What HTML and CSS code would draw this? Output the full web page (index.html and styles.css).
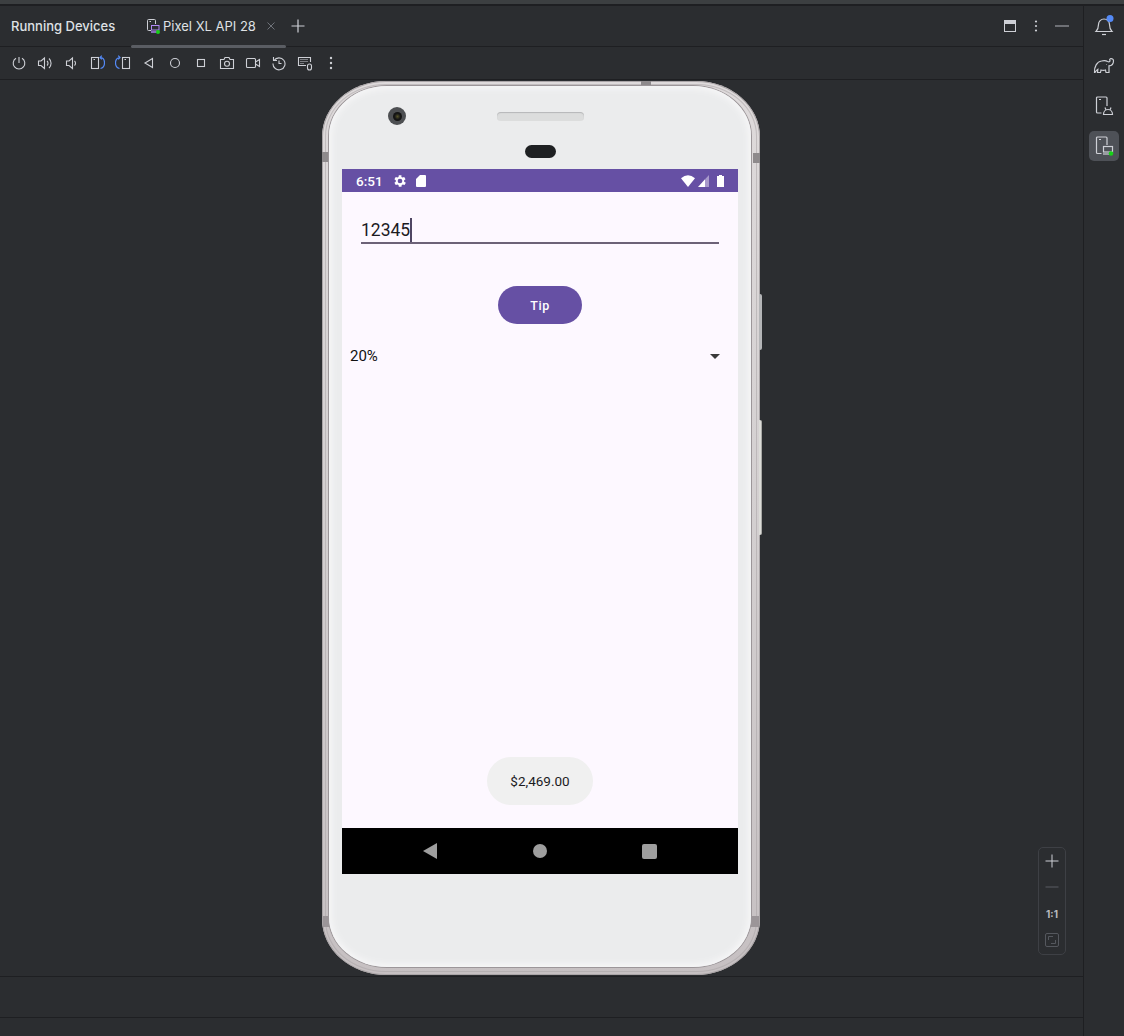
FILE: index.html
```html
<!DOCTYPE html>
<html lang="en">
<head>
<meta charset="utf-8">
<title>Running Devices</title>
<link rel="stylesheet" href="styles.css">
</head>
<body>
<div class="topstrip"></div>
<div class="ide">
  <main class="main">
    <header class="tabs">
      <span class="title">Running Devices</span>
      <div class="tab">
        <svg class="ic16" viewBox="0 0 16 16" fill="none">
          <path d="M6 12.500H3.500a1 1 0 0 1-1-1V2.500a1 1 0 0 1 1-1h6a1 1 0 0 1 1 1V6" stroke="#ced0d6"/>
          <path d="M4.500 3.500h1.500" stroke="#ced0d6"/>
          <rect x="6.500" y="7.500" width="7.500" height="4.500" stroke="#b189f5"/>
          <path d="M6 14h7" stroke="#b189f5" stroke-width="1.400"/>
          <circle cx="13" cy="14" r="2" fill="#17d117"/>
        </svg>
        <span class="tabname">Pixel XL API 28</span>
        <svg class="close" viewBox="0 0 10 10" fill="none"><path d="M1.500 1.500l7 7M8.500 1.500l-7 7" stroke="#6f737a"/></svg>
        <div class="tabline"></div>
      </div>
      <svg class="plus" viewBox="0 0 14 14" fill="none"><path d="M7 .5v13M.5 7h13" stroke="#ced0d6" stroke-width="1.200"/></svg>
      <div class="spacer"></div>
      <div class="winbtns">
        <svg class="ic12" viewBox="0 0 12 12" fill="none"><rect x=".5" y=".5" width="11" height="11" stroke="#ced0d6"/><rect x="1" y="1" width="10" height="3" fill="#ced0d6"/></svg>
        <svg class="ic12" viewBox="0 0 12 12"><circle cx="6" cy="1.500" r="1.100" fill="#ced0d6"/><circle cx="6" cy="6" r="1.100" fill="#ced0d6"/><circle cx="6" cy="10.500" r="1.100" fill="#ced0d6"/></svg>
        <svg class="ic14" viewBox="0 0 14 12"><path d="M0 6h14" stroke="#8b8e94" stroke-width="1.400"/></svg>
      </div>
    </header>
    <nav class="toolbar">
      <svg class="tool" viewBox="0 0 16 16" fill="none" stroke="#ced0d6" stroke-width="1.100"><path d="M8 2v6"/><path d="M5 3.200a5.800 5.800 0 1 0 6 0"/></svg>
      <svg class="tool" viewBox="0 0 16 16" fill="none" stroke="#ced0d6" stroke-width="1.100"><path d="M1.500 6v4.500h2.500l3.500 3V3L4 6z"/><path d="M10 6a3 3 0 0 1 0 4.500M12 3.500a6.500 6.500 0 0 1 0 9.500"/></svg>
      <svg class="tool" viewBox="0 0 16 16" fill="none" stroke="#ced0d6" stroke-width="1.100"><path d="M3.500 6v4.500h2.500l3.500 3V3L6 6z"/><path d="M11.500 6a3 3 0 0 1 0 4.500"/></svg>
      <svg class="tool" viewBox="0 0 16 16" fill="none"><rect x="2.500" y="2.500" width="7" height="11" stroke="#ced0d6" stroke-width="1.100"/><path d="M4.500 4.500h1.500" stroke="#ced0d6"/><path d="M11 2.500c3 0 4.500 2.400 4.500 5.300s-1.500 5.200-4 5.700M12.800.700L11 2.500l1.800 1.800" stroke="#548af7" stroke-width="1.200"/></svg>
      <svg class="tool" viewBox="0 0 16 16" fill="none"><rect x="7.500" y="2.500" width="7" height="11" stroke="#ced0d6" stroke-width="1.100"/><path d="M9.500 4.500h1.500" stroke="#ced0d6"/><path d="M5 2.500C2 2.500.5 4.900.5 7.800s1.500 5.200 4 5.700M3.200.700L5 2.500 3.200 4.300" stroke="#548af7" stroke-width="1.200"/></svg>
      <svg class="tool" viewBox="0 0 16 16" fill="none" stroke="#ced0d6" stroke-width="1.100"><path d="M11.500 3.500v9L4 8z"/></svg>
      <svg class="tool" viewBox="0 0 16 16" fill="none" stroke="#ced0d6" stroke-width="1.100"><circle cx="8" cy="8" r="4.500"/></svg>
      <svg class="tool" viewBox="0 0 16 16" fill="none" stroke="#ced0d6" stroke-width="1.100"><rect x="4.500" y="4.500" width="7" height="7"/></svg>
      <svg class="tool" viewBox="0 0 16 16" fill="none" stroke="#ced0d6" stroke-width="1.100"><path d="M1.500 4.500h3.500l1-2h4l1 2h3.500v9h-13z"/><circle cx="8" cy="8.700" r="2.500"/></svg>
      <svg class="tool" viewBox="0 0 16 16" fill="none" stroke="#ced0d6" stroke-width="1.100"><rect x="1.500" y="3.500" width="9" height="9" rx="1"/><path d="M10.500 7l4-2.500v7l-4-2.500"/></svg>
      <svg class="tool" viewBox="0 0 16 16" fill="none" stroke="#ced0d6" stroke-width="1.100"><path d="M3 5.500A6 6 0 1 1 2 8.500"/><path d="M2.500 2v3.500H6"/><path d="M8 5.500V8.500h2.500"/></svg>
      <svg class="tool" viewBox="0 0 16 16" fill="none" stroke="#ced0d6" stroke-width="1.100"><path d="M9 10.500H1.500v-8h12V7"/><path d="M3.500 4.500h8M3.500 6.500h8M3.500 8.500h4" stroke-dasharray="1 1"/><rect x="10.500" y="9" width="4" height="6" rx="2"/></svg>
      <svg class="tool" viewBox="0 0 16 16"><circle cx="8" cy="3" r="1.200" fill="#ced0d6"/><circle cx="8" cy="8" r="1.200" fill="#ced0d6"/><circle cx="8" cy="13" r="1.200" fill="#ced0d6"/></svg>
    </nav>
    <section class="stage">
      <div class="phone">
        <div class="btn-power"></div>
        <div class="btn-volume"></div>
        <div class="band band-top"></div>
        <div class="band band-left"></div>
        <div class="band band-right"></div>
        <div class="band band-bl"></div>
        <div class="band band-br"></div>
        <div class="bezel">
          <div class="top-bezel">
            <div class="camera"><div class="lens"></div></div>
            <div class="speaker"></div>
            <div class="sensor"></div>
          </div>
          <div class="screen">
            <div class="statusbar">
              <span class="clock">6:51</span>
              <svg class="st-gear" viewBox="0 0 24 24"><path fill="#fff" d="M19.400 13a7.500 7.500 0 0 0 0-2l2.100-1.600-2-3.500-2.500 1a7.500 7.500 0 0 0-1.700-1L15.400 3.200h-4L11 5.900a7.500 7.500 0 0 0-1.700 1l-2.500-1-2 3.500L6.900 11a7.500 7.500 0 0 0 0 2l-2.100 1.600 2 3.500 2.500-1a7.500 7.500 0 0 0 1.700 1l.4 2.700h4l.4-2.700a7.500 7.500 0 0 0 1.700-1l2.500 1 2-3.500zM13.200 15.500a3.500 3.500 0 1 1 0-7 3.500 3.500 0 0 1 0 7z" transform="translate(-1.200 0)"/></svg>
              <svg class="st-sd" viewBox="0 0 10 12"><path fill="#fff" d="M4 0h5a1 1 0 0 1 1 1v10a1 1 0 0 1-1 1H1a1 1 0 0 1-1-1V4z"/></svg>
              <div class="spacer"></div>
              <svg class="st-wifi" viewBox="0 0 15 11" preserveAspectRatio="none"><path fill="#fff" d="M0 3Q7.500-2.500 15 3L7.500 11z"/></svg>
              <svg class="st-signal" viewBox="0 0 11 11" preserveAspectRatio="none"><path fill="#fff" d="M0 11L7 4v7z"/><path fill="#a899cb" d="M7 4l4-4v11H7z"/></svg>
              <svg class="st-batt" viewBox="0 0 7 12"><path fill="#fff" d="M2 0h3v1h2v11H0V1h2z"/></svg>
            </div>
            <div class="app">
              <div class="field"><span class="value">12345</span><span class="caret"></span></div>
              <div class="tipwrap"><button class="tip">Tip</button></div>
              <div class="spinner"><span>20%</span><span class="arrow"></span></div>
              <div class="spacer"></div>
              <div class="resultwrap"><div class="result">$2,469.00</div></div>
            </div>
            <div class="navbar">
              <svg class="nav-back" viewBox="0 0 14 16"><path fill="#9e9e9e" d="M14 0v16L0 8z"/></svg>
              <div class="nav-home"></div>
              <div class="nav-recent"></div>
            </div>
          </div>
        </div>
      </div>
      <div class="zoom">
        <svg class="zoom-ic" viewBox="0 0 14 14"><path d="M7 .5v13M.5 7h13" stroke="#ced0d6" fill="none"/></svg>
        <svg class="zoom-ic" viewBox="0 0 14 14"><path d="M.5 7h13" stroke="#5a5d63" fill="none"/></svg>
        <span class="oneone">1:1</span>
        <svg class="zoom-ic" viewBox="0 0 14 14" fill="none"><rect x=".5" y=".5" width="13" height="13" rx="1.500" stroke="#55585e"/><path d="M3.500 7V3.500H8M10.500 7v3.500H6" stroke="#55585e"/></svg>
      </div>
    </section>
    <div class="bottom-a"></div>
    <div class="bottom-b"></div>
  </main>
  <aside class="stripe">
    <div class="stripe-btn">
      <svg class="ic22" viewBox="0 0 22 22" fill="none" stroke="#ced0d6" stroke-width="1.200"><path d="M3 16.500c2-2 2.500-3.500 2.500-7a5.500 5.500 0 0 1 11 0c0 3.500.5 5 2.500 7z"/><path d="M9 19.500h4"/><circle cx="17" cy="3.500" r="3.500" fill="#548af7" stroke="none"/></svg>
    </div>
    <div class="stripe-btn">
      <svg class="ic22" viewBox="0 0 22 22" fill="none" stroke="#ced0d6" stroke-width="1.200"><path d="M1.500 17.500C1 12 4 6.500 8.500 6c2.500-.5 4.500-.5 6 .5 1.500.8 2.500.3 2.500-1-.5-.8-.5-1.500.5-1.800 1.500-.4 3 .5 3 2 0 3-2 5-4.500 5.200v6.600h-3l-.5-2.500c-1.500.4-3 .4-4.500 0l-.5 2.500h-3l.4-3.200c-1 .4-1.700 1.200-2.900 3.200z"/><path d="M13 9.500h.5"/></svg>
    </div>
    <div class="stripe-btn">
      <svg class="ic22" viewBox="0 0 22 22" fill="none" stroke="#ced0d6" stroke-width="1.200"><path d="M8.500 18H4.500a1 1 0 0 1-1-1V3a1 1 0 0 1 1-1h8.500a1 1 0 0 1 1 1v8"/><path d="M6 4.500h2"/><path d="M10.500 19.500c0-3 2-5 4.500-5s4.500 2 4.500 5zM12 12.500l1 2.500M18 12.500l-1 2.500"/></svg>
    </div>
    <div class="stripe-btn active">
      <svg class="ic22" viewBox="0 0 22 22" fill="none" stroke="#ced0d6" stroke-width="1.200"><path d="M8.500 18.500H4.500a1 1 0 0 1-1-1V3a1 1 0 0 1 1-1h8.500a1 1 0 0 1 1 1v7"/><path d="M6 4.500h2"/><rect x="10.500" y="11.500" width="9" height="5.500"/><path d="M10 19h7"/><circle cx="18" cy="18.500" r="2.300" fill="#17d117" stroke="none"/></svg>
    </div>
  </aside>
</div>
</body>
</html>
```

FILE: styles.css
```css
* { box-sizing: border-box; }
html, body { margin: 0; padding: 0; height: 100%; overflow: hidden; }
body {
  background: #2b2d30;
  font-family: Inter, "Liberation Sans", sans-serif;
  color: #dfe1e5;
  display: flex;
  flex-direction: column;
}
.topstrip { height: 6px; flex: none; background: #3c3f41; border-bottom: 2px solid #1e1f22; }
.ide { flex: 1; display: flex; min-height: 0; }
.main { flex: 1; display: flex; flex-direction: column; min-width: 0; }
.spacer { flex: 1; }

.tabs {
  height: 41px; flex: none;
  display: flex; align-items: center;
  padding-left: 11px;
  border-bottom: 1px solid #1e1f22;
}
.title { font-size: 13px; font-weight: 500; color: #dfe1e5; width: 120px; }
.tab {
  position: relative;
  height: 40px; width: 155px;
  display: flex; align-items: center;
  padding-left: 14px;
  flex: none;
}
.ic16 { width: 16px; height: 16px; flex: none; }
.tabname { font-size: 13px; margin-left: 2px; width: 102px; white-space: nowrap; color: #dfe1e5; }
.close { width: 10px; height: 10px; flex: none; margin-left: 1px; }
.tabline {
  position: absolute; left: 0; right: 0; bottom: -2px;
  height: 3px; border-radius: 2px; background: #5a5d63;
}
.plus { width: 14px; height: 14px; margin-left: 5px; flex: none; }
.winbtns { display: flex; align-items: center; gap: 14px; padding-right: 14px; }
.ic12 { width: 12px; height: 12px; flex: none; }
.ic14 { width: 14px; height: 12px; flex: none; margin-left: -1px; }

.toolbar {
  height: 33px; flex: none;
  display: flex; align-items: center;
  gap: 10px;
  padding-left: 11px;
  border-bottom: 1px solid #1e1f22;
}
.tool { width: 16px; height: 16px; flex: none; }

.stage {
  position: relative;
  flex: 1; min-height: 0;
  display: flex; justify-content: center; align-items: center;
  padding-right: 1px;
}
.phone {
  position: relative;
  width: 438px; height: 894px; flex: none;
  border-radius: 64px / 56px;
  background: linear-gradient(180deg, #dedadb, #d3cfd0 50%, #c6c0c2);
  padding: 5px 9px 8px 7px;
  box-shadow: inset 0 0 0 1px #aaa5a7;
}
.phone::before {
  content: "";
  position: absolute; inset: 3px;
  border: 1px solid #a9a4a6;
  border-radius: 60px / 52px;
  opacity: .55;
}
.band { position: absolute; background: #8e8a8c; }
.band-top { left: 319px; top: 0; width: 10px; height: 4px; }
.band-left { left: 0; top: 71px; width: 6px; height: 10px; }
.band-right { right: 0; top: 72px; width: 7px; height: 10px; }
.band-bl { left: 1px; bottom: 48px; width: 8px; height: 11px; background: #9b9598; }
.band-br { right: 1px; bottom: 48px; width: 8px; height: 11px; background: #9b9598; }
.btn-power, .btn-volume {
  position: absolute; left: calc(100% - 1px); width: 3px;
  border-radius: 0 2px 2px 0;
}
.btn-power { top: 213px; height: 56px; background: #b4b5b7; }
.btn-volume { top: 339px; height: 115px; background: #dcdcd8; border-right: 1px solid #a9a9a6; }
.bezel {
  position: relative;
  height: 100%;
  border-radius: 58px / 50px;
  background: #ebeced;
  box-shadow: inset 0 0 6px 3px #f6f6f7, 0 0 0 1px #9c9699;
  padding: 0 13px;
  display: flex; flex-direction: column;
}
.top-bezel { position: relative; height: 83px; flex: none; }
.camera {
  position: absolute; left: 46px; top: 21px;
  width: 18px; height: 18px; border-radius: 50%;
  background: #4d4f52; display: flex; align-items: center; justify-content: center;
}
.lens { width: 9px; height: 9px; border-radius: 50%; background: radial-gradient(circle, #55532a 0, #161616 45%, #0c0c0c 100%); }
.speaker {
  position: absolute; left: 155px; top: 26px;
  width: 87px; height: 9px; border-radius: 4px;
  background: #dcdddd; box-shadow: inset 0 1px 1px #b5b6b8;
}
.sensor {
  position: absolute; left: 183px; top: 59px;
  width: 31px; height: 13px; border-radius: 7px;
  background: #1e2022;
}
.screen { width: 396px; height: 705px; flex: none; display: flex; flex-direction: column; }

.statusbar {
  height: 23px; flex: none;
  background: #6650a4;
  display: flex; align-items: center;
  padding: 0 13px;
  color: #fff;
  font-family: Roboto, sans-serif;
}
.clock { font-size: 13.500px; font-weight: 500; width: 37px; padding-left: 1px; }
.st-gear { width: 16px; height: 16px; flex: none; }
.st-sd { width: 10px; height: 12px; flex: none; margin-left: 8px; }
.st-wifi { width: 14px; height: 12px; flex: none; }
.st-signal { width: 11px; height: 12px; flex: none; margin-left: 3px; }
.st-batt { width: 7px; height: 12px; flex: none; margin-left: 8px; margin-right: 1px; }

.app {
  flex: 1; min-height: 0;
  background: #fdf8ff;
  display: flex; flex-direction: column;
  color: #1c1b1f;
  font-family: Roboto, sans-serif;
}
.field {
  margin: 24px 19px 0;
  height: 28px;
  padding-top: 2px;
  display: flex; align-items: center;
  border-bottom: 2px solid #6c6277;
  font-size: 17.500px;
}
.value { line-height: 26px; }
.caret { width: 1.500px; height: 24px; background: #4f4663; }
.tipwrap { display: flex; justify-content: center; margin-top: 42px; }
.tip {
  width: 84px; height: 38px; border: 0; border-radius: 19px;
  background: #6650a4; color: #fff;
  font: 500 12.500px Roboto, sans-serif; letter-spacing: .6px;
}
.spinner {
  margin-top: 20px; height: 24px;
  padding: 0 18px 0 8px;
  display: flex; justify-content: space-between; align-items: center;
  font-size: 15px; color: #111;
}
.arrow {
  width: 0; height: 0;
  border-left: 5px solid transparent; border-right: 5px solid transparent;
  border-top: 5px solid #3a3a3a;
}
.resultwrap { display: flex; justify-content: center; padding-bottom: 23px; }
.result {
  width: 106px; height: 48px; border-radius: 24px;
  background: #f0f0f0; color: #1c1b1f;
  display: flex; align-items: center; justify-content: center;
  font-size: 13.500px;
}
.navbar {
  height: 46px; flex: none; background: #000;
  display: flex; align-items: center; justify-content: center;
  gap: 0;
}
.nav-back { width: 14px; height: 16px; margin-right: 96px; flex: none; }
.nav-home { width: 14px; height: 14px; border-radius: 50%; background: #9e9e9e; margin-right: 95px; flex: none; }
.nav-recent { width: 15px; height: 15px; border-radius: 2px; background: #9e9e9e; flex: none; }

.zoom {
  position: absolute; right: 17px; top: 767px;
  width: 28px; height: 108px;
  border: 1px solid #3e4045; border-radius: 5px;
  display: flex; flex-direction: column; align-items: center; justify-content: space-between;
  padding: 6px 0 7px;
  background: #2b2d30;
}
.zoom-ic { width: 14px; height: 14px; }
.oneone { font-size: 10px; font-weight: 700; color: #b9bbbf; line-height: 14px; }

.bottom-a { height: 41px; flex: none; border-top: 1px solid #1e1f22; }
.bottom-b { height: 19px; flex: none; border-top: 1px solid #1e1f22; }

.stripe {
  width: 41px; flex: none;
  border-left: 1px solid #1e1f22;
  display: flex; flex-direction: column; align-items: center;
  gap: 10px; padding-top: 5px;
}
.stripe-btn {
  width: 30px; height: 30px; border-radius: 5px;
  display: flex; align-items: center; justify-content: center;
}
.stripe-btn.active { background: #4e5157; }
.ic22 { width: 22px; height: 22px; }
```
